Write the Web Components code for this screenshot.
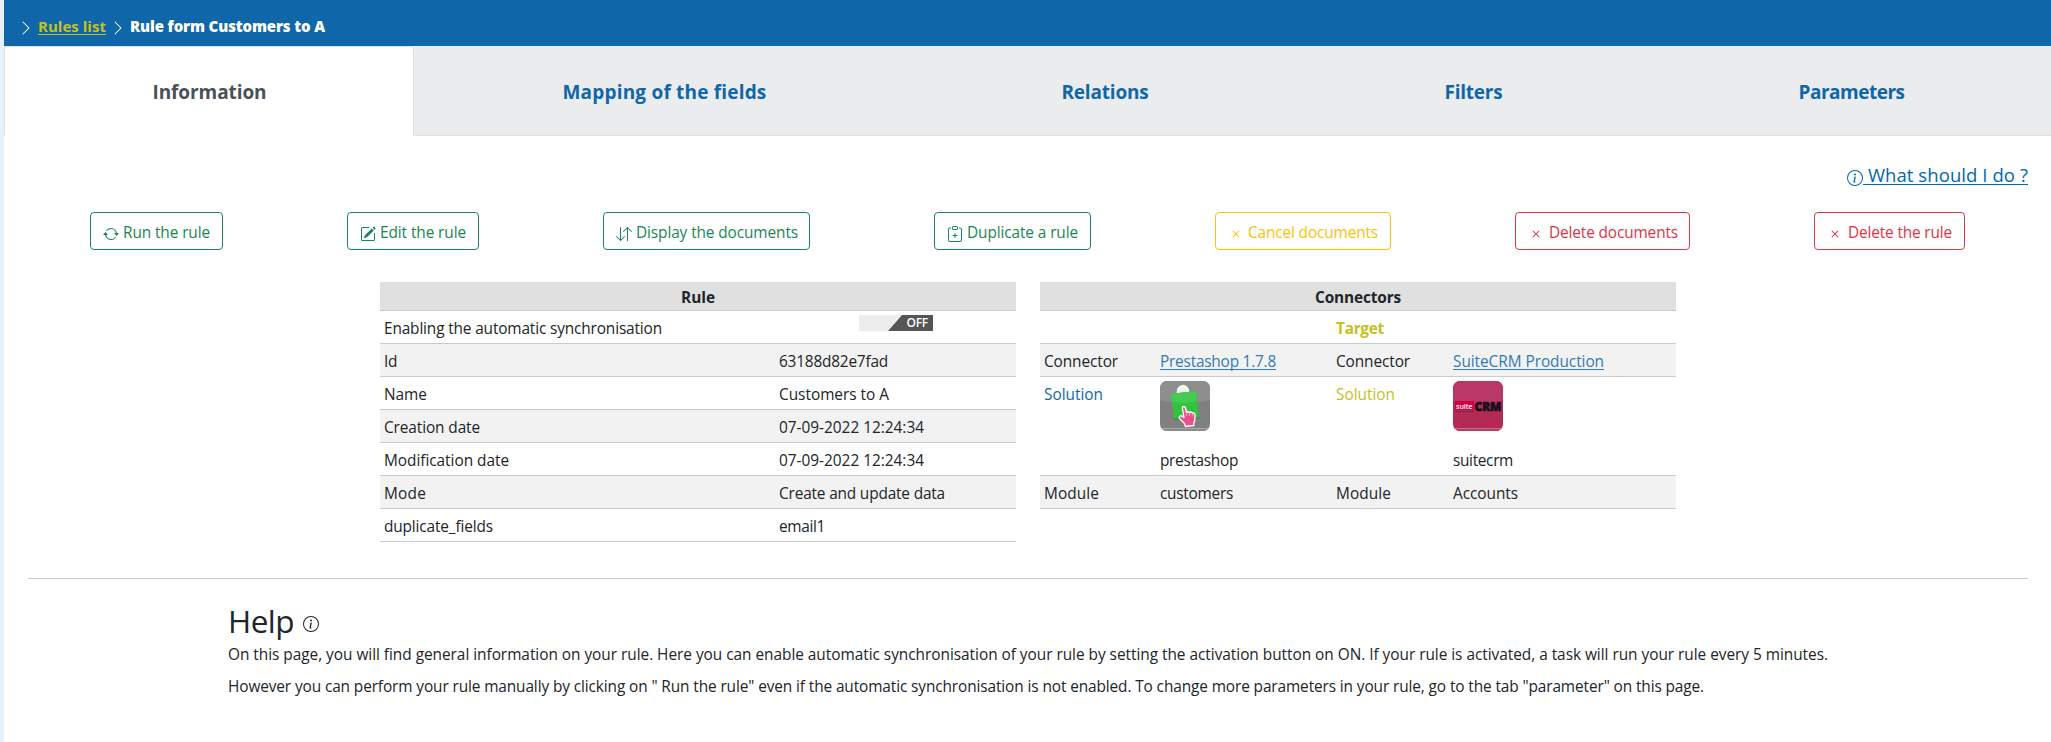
<!DOCTYPE html>
<html lang="en">
<head>
<meta charset="utf-8">
<title>Rule form Customers to A</title>
<style>
html,body{margin:0;padding:0}
body{width:2051px;height:742px;overflow:hidden;background:#e8f0fa;font:15.4px/24px "Open Sans","Noto Sans",sans-serif;color:#212529}
</style>
</head>
<body>
<rule-page></rule-page>
<script>
/* Text run that spreads its letters to fill a given width. */
class FitText extends HTMLElement{
  constructor(){
    super();
    this.attachShadow({mode:'open'}).innerHTML='<style>:host{display:inline-block;white-space:pre;text-align:left}span{display:inline-block;white-space:pre}:host([u]) span{text-decoration:underline;text-decoration-thickness:1px;text-underline-offset:2px;text-decoration-skip-ink:none}</style><span><slot></slot></span>';
  }
  connectedCallback(){
    const w=parseFloat(this.getAttribute('w'));
    if(!w)return;
    const s=this.shadowRoot.querySelector('span');
    const n=this.textContent.length;
    const now=s.getBoundingClientRect().width;
    s.style.letterSpacing=((w-now)/n).toFixed(4)+'px';
    this.style.width=w+'px';
  }
}

const ICONS={
  chevron:'<path fill-rule="evenodd" d="M4.646 1.646a.5.5 0 0 1 .708 0l6 6a.5.5 0 0 1 0 .708l-6 6a.5.5 0 0 1-.708-.708L10.293 8 4.646 2.354a.5.5 0 0 1 0-.708z"/>',
  info:'<path d="M8 15A7 7 0 1 1 8 1a7 7 0 0 1 0 14zm0 1A8 8 0 1 0 8 0a8 8 0 0 0 0 16z"/><path d="m8.930 6.588-2.290.287-.082.380.450.083c.294.070.352.176.288.469l-.738 3.468c-.194.897.105 1.319.808 1.319.545 0 1.178-.252 1.465-.598l.088-.416c-.2.176-.492.246-.686.246-.275 0-.375-.193-.304-.533L8.930 6.588zM9 4.500a1 1 0 1 1-2 0 1 1 0 0 1 2 0z"/>',
  repeat:'<path d="M11.534 7h3.932a.25.25 0 0 1 .192.410l-1.966 2.360a.25.25 0 0 1-.384 0l-1.966-2.360a.25.25 0 0 1 .192-.410zm-11 2h3.932a.25.25 0 0 0 .192-.410L2.692 6.230a.25.25 0 0 0-.384 0L.342 8.590A.25.25 0 0 0 .534 9z"/><path fill-rule="evenodd" d="M8 3c-1.552 0-2.940.707-3.857 1.818a.5.5 0 1 1-.771-.636A6.002 6.002 0 0 1 13.917 7H12.900A5.002 5.002 0 0 0 8 3zM3.100 9a5.002 5.002 0 0 0 8.757 2.182.5.5 0 1 1 .771.636A6.002 6.002 0 0 1 2.083 9H3.100z"/>',
  pencil:'<path d="M15.502 1.940a.5.5 0 0 1 0 .706L14.459 3.690l-2-2L13.502.646a.5.5 0 0 1 .707 0l1.293 1.293zm-1.750 2.456-2-2L4.939 9.210a.5.5 0 0 0-.121.196l-.805 2.414a.25.25 0 0 0 .316.316l2.414-.805a.5.5 0 0 0 .196-.120l6.813-6.814z"/><path fill-rule="evenodd" d="M1 13.500A1.500 1.500 0 0 0 2.500 15h11a1.500 1.500 0 0 0 1.500-1.500v-6a.5.5 0 0 0-1 0v6a.5.5 0 0 1-.5.5h-11a.5.5 0 0 1-.5-.5v-11a.5.5 0 0 1 .5-.5H9a.5.5 0 0 0 0-1H2.500A1.500 1.500 0 0 0 1 2.500v11z"/>',
  updown:'<path fill-rule="evenodd" d="M11.500 15a.5.5 0 0 0 .5-.5V2.707l3.146 3.147a.5.5 0 0 0 .708-.708l-4-4a.5.5 0 0 0-.708 0l-4 4a.5.5 0 1 0 .708.708L11 2.707V14.500a.5.5 0 0 0 .5.5zm-7-14a.5.5 0 0 1 .5.5v11.793l3.146-3.147a.5.5 0 0 1 .708.708l-4 4a.5.5 0 0 1-.708 0l-4-4a.5.5 0 0 1 .708-.708L4 13.293V1.500a.5.5 0 0 1 .5-.5z"/>',
  clip:'<path fill-rule="evenodd" d="M8 7a.5.5 0 0 1 .5.5V9H10a.5.5 0 0 1 0 1H8.500v1.500a.5.5 0 0 1-1 0V10H6a.5.5 0 0 1 0-1h1.500V7.500A.5.5 0 0 1 8 7z"/><path d="M4 1.500H3a2 2 0 0 0-2 2V14a2 2 0 0 0 2 2h10a2 2 0 0 0 2-2V3.500a2 2 0 0 0-2-2h-1v1h1a1 1 0 0 1 1 1V14a1 1 0 0 1-1 1H3a1 1 0 0 1-1-1V3.500a1 1 0 0 1 1-1h1v-1z"/><path d="M9.500 1a.5.5 0 0 1 .5.5v1a.5.5 0 0 1-.5.5h-3a.5.5 0 0 1-.5-.5v-1a.5.5 0 0 1 .5-.5h3zm-3-1A1.500 1.500 0 0 0 5 1.500v1A1.500 1.500 0 0 0 6.500 4h3A1.500 1.500 0 0 0 11 2.500v-1A1.500 1.500 0 0 0 9.500 0h-3z"/>',
  x:'<path d="M4.646 4.646a.5.5 0 0 1 .708 0L8 7.293l2.646-2.647a.5.5 0 0 1 .708.708L8.707 8l2.647 2.646a.5.5 0 0 1-.708.708L8 8.707l-2.646 2.647a.5.5 0 0 1-.708-.708L7.293 8 4.646 5.354a.5.5 0 0 1 0-.708z"/>'
};
class UiIcon extends HTMLElement{
  constructor(){super();this.attachShadow({mode:'open'})}
  connectedCallback(){
    const s=this.getAttribute('size')||16;
    this.shadowRoot.innerHTML=`<style>:host{display:inline-block;flex:none;width:${s}px;height:${s}px}svg{display:block;fill:currentColor}</style><svg width="${s}" height="${s}" viewBox="0 0 16 16">${ICONS[this.getAttribute('name')]}</svg>`;
  }
}

class RuleBreadcrumb extends HTMLElement{
  constructor(){
    super();
    this.attachShadow({mode:'open'}).innerHTML=`<style>
:host{display:flex;align-items:center;height:46px;background:#0f66a9;color:#fff;font-weight:700;font-size:15px;padding:6px 0 0 14px;box-sizing:border-box}
a{color:#c8c01c;margin:0 4px 0 4px}
ui-icon{margin-top:4px}
b{margin-left:4px}
</style><ui-icon name="chevron"></ui-icon><a><fit-text u w="68">Rules list</fit-text></a><ui-icon name="chevron"></ui-icon><b><fit-text w="195">Rule form Customers to A</fit-text></b>`;
  }
}

class RuleTabs extends HTMLElement{
  constructor(){
    super();
    this.attachShadow({mode:'open'}).innerHTML=`<style>
:host{display:grid;grid-template-columns:410px 501px 380px 357px 399px;height:90px;background:#ebecee;color:#0f66a9;font-weight:700;font-size:19px}
div{display:flex;align-items:center;justify-content:center;border-bottom:1px solid #dee2e6;box-sizing:border-box;padding-top:3px}
.on{background:#fff;color:#495057;border:1px solid #dee2e6;border-bottom-color:#fff;border-radius:4px 4px 0 0;padding:2px 0 0 1px}
</style><div class="on"><fit-text w="114">Information</fit-text></div><div><fit-text w="204">Mapping of the fields</fit-text></div><div><fit-text w="87">Relations</fit-text></div><div><fit-text w="58">Filters</fit-text></div><div><fit-text w="106">Parameters</fit-text></div>`;
  }
}

class ActionButton extends HTMLElement{
  constructor(){super();this.attachShadow({mode:'open'})}
  connectedCallback(){
    const g=n=>this.getAttribute(n);
    this.shadowRoot.innerHTML=`<style>
:host{display:flex;align-items:center;box-sizing:border-box;width:${g('width')}px;height:38px;border:1px solid currentColor;border-radius:4px;padding-left:12px}
ui-icon{margin:6px ${g('gap')||4}px 0 0}
fit-text{margin-top:4px}
</style><ui-icon name="${g('icon')}"></ui-icon><fit-text w="${g('tw')}">${g('label')}</fit-text>`;
  }
}

class SyncToggle extends HTMLElement{
  constructor(){
    super();
    this.attachShadow({mode:'open'}).innerHTML=`<style>
:host{display:flex;justify-content:flex-end;box-sizing:border-box;width:74px;height:16px;padding-right:5px;background:linear-gradient(131.2deg,#ededed 0 32px,#555 32.800px);color:#fff;font:600 12px/16px "Open Sans","Noto Sans",sans-serif}
</style><fit-text w="21.500">OFF</fit-text>`;
  }
}

class RuleTable extends HTMLElement{
  constructor(){
    super();
    const rows=[['Id',13,'63188d82e7fad',109],['Name',43,'Customers to A',110],['Creation date',96,'07-09-2022 12:24:34',145],['Modification date',125,'07-09-2022 12:24:34',145],['Mode',42,'Create and update data',166],['duplicate_fields',109,'email1',46]];
    this.attachShadow({mode:'open'}).innerHTML=`<style>
:host{display:block;width:636px}
.h{height:27px;padding-top:1px;line-height:29px;background:#e0e0e0;border-bottom:1px solid #c9cacb;text-align:center;font-weight:700}
.r{display:grid;grid-template-columns:395px 1fr;padding:6px 4px 2px;box-sizing:border-box;height:33px;border-bottom:1px solid #c9cacb}
.r:nth-child(odd of .r){background:#fff}.r:nth-child(even of .r){background:#f2f2f2}
sync-toggle{margin:-2px 0 0 80px}
</style><div class="h"><fit-text w="34">Rule</fit-text></div>
<div class="r"><fit-text w="278">Enabling the automatic synchronisation</fit-text><sync-toggle></sync-toggle></div>`+rows.map(r=>`<div class="r"><fit-text w="${r[1]}">${r[0]}</fit-text><fit-text w="${r[3]}">${r[2]}</fit-text></div>`).join('');
  }
}

class PrestaLogo extends HTMLElement{
  constructor(){
    super();
    this.attachShadow({mode:'open'}).innerHTML=`<style>:host{display:block;width:50px;height:50px}svg{display:block}</style>
<svg width="50" height="50" viewBox="0 0 50 50"><defs><clipPath id="c"><rect width="50" height="50" rx="7"/></clipPath></defs>
<g clip-path="url(#c)"><rect width="50" height="50" fill="#808080"/><path d="M0 0h50v19Q25 25 0 19Z" fill="#8e8e8e"/><rect y="47" width="50" height="1" fill="#a9a9a9"/><rect y="48" width="50" height="2" fill="#8c8c8c"/></g>
<path d="M18 12C17 3 28 3 28 11" fill="#e9f5ea" stroke="#f4fbf4" stroke-width="2.500"/>
<path d="M12 37 40 36 39 37.500 15 39Z" fill="#5d6d5d"/>
<path d="M11 13 36 10 39 36.500 14 38Z" fill="#2fc43c"/><path d="M11 13 36 10 37 20 25 22 12 21Z" fill="#44cb50"/>
<path d="M22.300 27C22.300 25 25 25 25.500 27L26.500 31.500Q28 30 29.500 31.500Q31.500 30.300 32.500 32Q35 31.500 35 34L34.800 39.500 33.800 42V44.500L25.500 45.500 24.500 42.500 19.500 37.500C18.500 35 21 34 22.500 35.500L24 36.500Z" fill="#e8528c" stroke="#fff" stroke-width="1.300" stroke-linejoin="round"/><path d="M26.700 31V35M29.500 31.500V35M32.300 32V35" stroke="#fbd0e0" stroke-width=".7"/></svg>`;
  }
}
class SuiteLogo extends HTMLElement{
  constructor(){
    super();
    this.attachShadow({mode:'open'}).innerHTML=`<style>:host{display:block;width:50px;height:50px}svg{display:block}text{font-family:"Open Sans","Noto Sans",sans-serif;font-weight:800}</style>
<svg width="50" height="50" viewBox="0 0 50 50"><defs><clipPath id="c"><rect width="50" height="50" rx="7"/></clipPath></defs>
<g clip-path="url(#c)"><rect width="50" height="50" fill="#b32a55"/><path d="M0 0h50v20Q25 25 0 20Z" fill="#ba3865"/><rect y="47" width="50" height="1" fill="#d0688c"/><rect y="48" width="50" height="2" fill="#b83b63"/></g>
<rect x="2" y="20" width="19" height="9" fill="#cf0043"/><path d="M2 30.500H21" stroke="#84183a" stroke-width=".8"/>
<text x="3" y="27.500" font-size="7.500" fill="#fff" style="font-weight:600" textLength="16.500" lengthAdjust="spacingAndGlyphs">suite</text>
<text x="21.500" y="30" font-size="13" fill="#17101a" stroke="#17101a" stroke-width=".7" textLength="27" lengthAdjust="spacingAndGlyphs">CRM</text></svg>`;
  }
}

class ConnectorTable extends HTMLElement{
  constructor(){
    super();
    this.attachShadow({mode:'open'}).innerHTML=`<style>
:host{display:block;width:636px}
.h{height:27px;padding-top:1px;line-height:29px;background:#e0e0e0;border-bottom:1px solid #c9cacb;text-align:center;font-weight:700}
.r{display:grid;grid-template-columns:116px 176px 117px 1fr;height:33px;padding:6px 4px 2px;box-sizing:border-box;border-bottom:1px solid #c9cacb}
.s{background:#f2f2f2}.tall{height:99px}
.y{color:#c8c01c}.b{color:#0f66a9}
a{color:#337ab7}
presta-logo,suite-logo{margin:-2px 0 18px 0}
.tall div fit-text{display:block}
</style><div class="h"><fit-text w="86">Connectors</fit-text></div>
<div class="r"><i></i><i></i><b class="y"><fit-text w="48">Target</fit-text></b></div>
<div class="r s"><fit-text w="74">Connector</fit-text><a><fit-text u w="116">Prestashop 1.7.8</fit-text></a><fit-text w="74">Connector</fit-text><a><fit-text u w="151">SuiteCRM Production</fit-text></a></div>
<div class="r tall"><fit-text class="b" w="59">Solution</fit-text><div><presta-logo></presta-logo><fit-text w="78">prestashop</fit-text></div><fit-text class="y" w="59">Solution</fit-text><div><suite-logo></suite-logo><fit-text w="60">suitecrm</fit-text></div></div>
<div class="r s"><fit-text w="55">Module</fit-text><fit-text w="73">customers</fit-text><fit-text w="55">Module</fit-text><fit-text w="65">Accounts</fit-text></div>`;
  }
}

class RuleHelp extends HTMLElement{
  constructor(){
    super();
    this.attachShadow({mode:'open'}).innerHTML=`<style>
:host{display:block;margin:0 23px 0 24px;border-top:1px solid #c9cacb;padding:20px 0 0 200px}
h2{display:flex;align-items:center;margin:0;font-size:31.500px;font-weight:400;line-height:40px;height:44px}
fit-text{position:static}
ui-icon{margin:6px 0 0 9px}
p{margin:0;height:24px}p+p{margin-top:8px}
</style><h2><fit-text w="66">Help</fit-text><ui-icon name="info"></ui-icon></h2>
<p><fit-text w="1600">On this page, you will find general information on your rule. Here you can enable automatic synchronisation of your rule by setting the activation button on ON. If your rule is activated, a task will run your rule every 5 minutes.</fit-text></p>
<p><fit-text w="1476">However you can perform your rule manually by clicking on " Run the rule" even if the automatic synchronisation is not enabled. To change more parameters in your rule, go to the tab "parameter" on this page.</fit-text></p>`;
  }
}

class RulePage extends HTMLElement{
  constructor(){
    super();
    this.attachShadow({mode:'open'}).innerHTML=`<style>
:host{display:block;margin-left:4px;height:742px;background:#fff}
.what{display:flex;justify-content:flex-end;align-items:center;height:30px;padding:24px 23px 1px 0;color:#0068b3;font-size:18.500px}
.what ui-icon{margin-top:5px}
.acts{display:flex;justify-content:space-around;margin:21px 24px 32px}
.g{color:#198754}.y{color:#ffc107}.r{color:#dc3545}
.tables{display:flex;gap:24px;margin-left:376px;height:296px}
</style>
<rule-breadcrumb></rule-breadcrumb><rule-tabs></rule-tabs>
<div class="what"><ui-icon name="info"></ui-icon><fit-text u w="165"> What should I do ?</fit-text></div>
<div class="acts">
<action-button class="g" width="133" icon="repeat" tw="87" label="Run the rule"></action-button>
<action-button class="g" width="132" icon="pencil" tw="86" label="Edit the rule"></action-button>
<action-button class="g" width="207" icon="updown" tw="162" label="Display the documents"></action-button>
<action-button class="g" width="157" icon="clip" tw="111" label="Duplicate a rule"></action-button>
<action-button class="y" width="176" icon="x" tw="130" label="Cancel documents"></action-button>
<action-button class="r" width="175" icon="x" gap="5" tw="129" label="Delete documents"></action-button>
<action-button class="r" width="151" icon="x" gap="5" tw="104" label="Delete the rule"></action-button>
</div>
<div class="tables"><rule-table></rule-table><connector-table></connector-table></div>
<rule-help></rule-help>`;
  }
}
customElements.define('rule-page',RulePage);
customElements.define('rule-breadcrumb',RuleBreadcrumb);
customElements.define('rule-tabs',RuleTabs);
customElements.define('action-button',ActionButton);
customElements.define('sync-toggle',SyncToggle);
customElements.define('rule-table',RuleTable);
customElements.define('presta-logo',PrestaLogo);
customElements.define('suite-logo',SuiteLogo);
customElements.define('connector-table',ConnectorTable);
customElements.define('rule-help',RuleHelp);
customElements.define('ui-icon',UiIcon);
customElements.define('fit-text',FitText);
</script>
</body>
</html>
